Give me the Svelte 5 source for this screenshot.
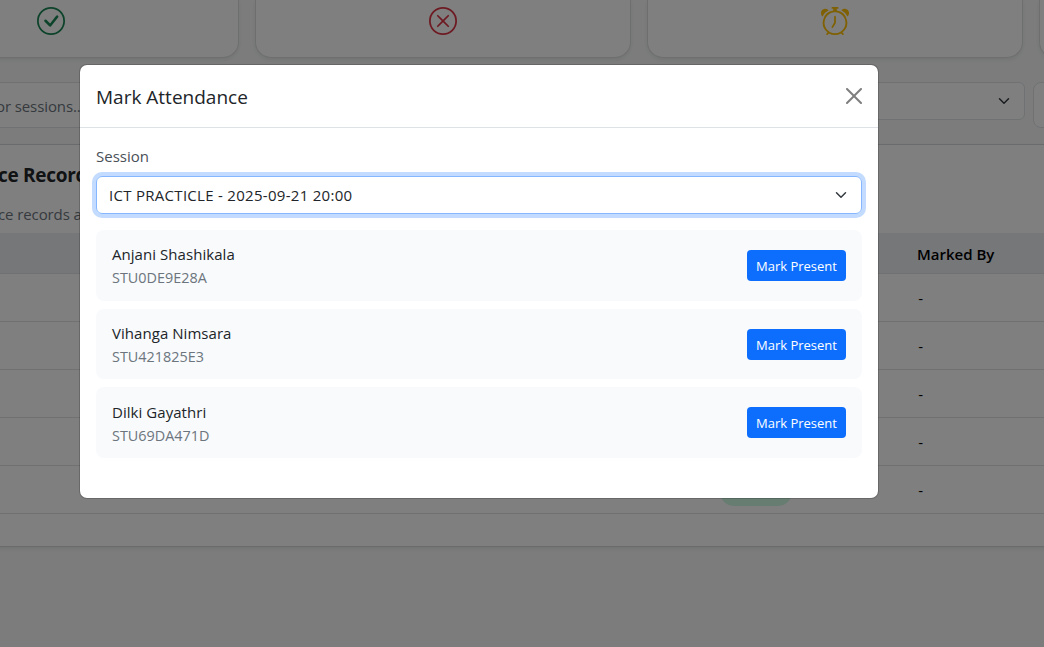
<script>
  const students = [
    { name: 'Anjani Shashikala', id: 'STU0DE9E28A' },
    { name: 'Vihanga Nimsara', id: 'STU421825E3' },
    { name: 'Dilki Gayathri', id: 'STU69DA471D' }
  ];
  const rows = [1, 2, 3, 4, 5];
  const stats = ['present', 'absent', 'late', 'rate'];
</script>

<div class="screen">
  <main class="page">
    <div class="stats">
      {#each stats as stat}
        <div class="stat {stat}">
          {#if stat !== 'rate'}
            <svg width="28" height="28" viewBox="0 0 16 16" fill="currentColor">
              {#if stat === 'late'}
                <path d="M8.5 5.5a.5.5 0 0 0-1 0v3.362l-1.429 2.38a.5.5 0 1 0 .858.515l1.5-2.5A.5.5 0 0 0 8.5 9z" />
                <path d="M6.5 0a.5.5 0 0 0 0 1H7v1.07a7.001 7.001 0 0 0-3.273 12.474l-.602.602a.5.5 0 0 0 .707.708l.746-.746A6.97 6.97 0 0 0 8 16a6.97 6.97 0 0 0 3.422-.892l.746.746a.5.5 0 0 0 .707-.708l-.601-.602A7.001 7.001 0 0 0 9 2.07V1h.5a.5.5 0 0 0 0-1zm1.038 3.018a6 6 0 0 1 .924 0 6 6 0 1 1-.924 0M0 3.5c0 .753.333 1.429.86 1.887A8.04 8.04 0 0 1 4.387 1.86 2.5 2.5 0 0 0 0 3.5M13.5 1c-.753 0-1.429.333-1.887.86a8.04 8.04 0 0 1 3.527 3.527A2.5 2.5 0 0 0 13.5 1" />
              {:else}
                <path d="M8 15A7 7 0 1 1 8 1a7 7 0 0 1 0 14m0 1A8 8 0 1 0 8 0a8 8 0 0 0 0 16" />
                {#if stat === 'present'}
                  <path d="m10.97 4.97-.02.022-3.473 4.425-2.093-2.094a.75.75 0 0 0-1.06 1.06L6.97 11.03a.75.75 0 0 0 1.079-.02l3.992-4.99a.75.75 0 0 0-1.071-1.05" />
                {:else}
                  <path d="M4.646 4.646a.5.5 0 0 1 .708 0L8 7.293l2.646-2.647a.5.5 0 0 1 .708.708L8.707 8l2.647 2.646a.5.5 0 0 1-.708.708L8 8.707l-2.646 2.647a.5.5 0 0 1-.708-.708L7.293 8 4.646 5.354a.5.5 0 0 1 0-.708" />
                {/if}
              {/if}
            </svg>
          {/if}
        </div>
      {/each}
    </div>

    <div class="filters">
      <div class="search"><span>or sessions...</span></div>
      <div class="filter">
        <svg width="16" height="12" viewBox="0 0 16 16"><path fill="none" stroke="#343a40" stroke-width="2" stroke-linecap="round" stroke-linejoin="round" d="m2 5 6 6 6-6" /></svg>
      </div>
      <div class="date"></div>
    </div>

    <section class="records">
      <h2>ce Records</h2>
      <p>ce records a</p>
      <div class="thead"><span>Marked By</span></div>
      {#each rows as row}
        <div class="trow">
          {#if row === 5}<b class="badge">present</b>{/if}
          <span>-</span>
        </div>
      {/each}
    </section>
  </main>

  <div class="backdrop">
    <div class="modal">
      <header>
        <h5>Mark Attendance</h5>
        <svg width="16" height="16" viewBox="0 0 16 16"><path d="M.293.293a1 1 0 0 1 1.414 0L8 6.586 14.293.293a1 1 0 1 1 1.414 1.414L9.414 8l6.293 6.293a1 1 0 0 1-1.414 1.414L8 9.414l-6.293 6.293a1 1 0 0 1-1.414-1.414L6.586 8 .293 1.707a1 1 0 0 1 0-1.414" /></svg>
      </header>
      <div class="body">
        <div class="label">Session</div>
        <div class="select">
          <span>ICT PRACTICLE - 2025-09-21 20:00</span>
          <svg width="16" height="12" viewBox="0 0 16 16"><path fill="none" stroke="#343a40" stroke-width="2" stroke-linecap="round" stroke-linejoin="round" d="m2 5 6 6 6-6" /></svg>
        </div>
        <div class="list">
          {#each students as s}
            <div class="student">
              <div class="who">
                <div class="name">{s.name}</div>
                <div class="sid">{s.id}</div>
              </div>
              <button>Mark Present</button>
            </div>
          {/each}
        </div>
      </div>
    </div>
  </div>
</div>

<style>
  :global(body) { background: #f8f9fa; }
  * { box-sizing: border-box; }
  .screen {
    position: relative; width: 1044px; height: 647px; overflow: hidden;
    background: #f8f9fa; color: #212529;
    font: 15px/24px "Segoe UI", "Open Sans", "Noto Sans", sans-serif;
  }
  .stats { display: flex; gap: 16px; margin-left: -137px; height: 58px; }
  .stat {
    flex: 0 0 376px; padding: 7px 0 0 173px; background: #fff;
    border: 1px solid #dcdddd; border-top: 0; border-radius: 0 0 16px 16px;
    box-shadow: 0 2px 4px rgba(0, 0, 0, .075);
  }
  .stat svg { display: block; }
  .present { color: #198754; }
  .absent { color: #dc3545; }
  .late { color: #ffc107; }
  .filters { display: flex; gap: 8px; align-items: flex-start; margin: 24px 0 0 -20px; height: 62px; width: 1120px; }
  .search, .filter, .date { border: 1px solid #dee2e6; border-radius: 8px; background: #fff; height: 46px; }
  .search { width: 637px; padding: 11px 0 0 15px; color: #6c757d; letter-spacing: -.1px; }
  .filter { width: 400px; height: 38px; border-radius: 6px; display: flex; align-items: center; justify-content: flex-end; padding-right: 12px; }
  .date { flex: 1; }
  .records {
    width: 1060px; margin-left: -8px; height: 403px; background: #fff;
    border: 1px solid #d5d7d9; box-shadow: 0 2px 4px rgba(0, 0, 0, .075);
  }
  .records h2 { margin: 18px 0 0 5px; font-size: 19px; line-height: 24px; font-weight: 700; letter-spacing: -.3px; }
  .records p { margin: 15px 0 7px 5px; color: #6c757d; letter-spacing: -.1px; }
  .thead { height: 41px; background: #eceff3; border-bottom: 1px solid #dee2e6; padding: 9px 0 0 924px; font-weight: 600; color: #000; }
  .trow { height: 48px; border-bottom: 1px solid #dee2e6; display: flex; align-items: center; justify-content: flex-end; padding-right: 128px; color: #000; }
  .badge { width: 72px; height: 29px; border-radius: 14px; margin: 3px 126px 0 0; background: #d1fae5; color: #047857; text-align: center; font-size: 13px; line-height: 26px; font-weight: 600; }
  .backdrop { position: absolute; inset: 0; background: rgba(0, 0, 0, .5); padding: 64px 0 0 79px; }
  .modal { width: 800px; height: 435px; background: #fff; background-clip: padding-box; border: 1px solid rgba(0, 0, 0, .175); border-radius: 8px; }
  header { height: 63px; border-bottom: 1px solid #dee2e6; display: flex; align-items: center; justify-content: space-between; padding: 0 16px; }
  header svg { opacity: .5; }
  h5 { margin: 2px 0 0; font-size: 19px; line-height: 30px; font-weight: 400; }
  .body { padding: 16px; }
  .label { margin-bottom: 8px; color: #495057; }
  .select {
    height: 38px; margin-bottom: 16.2px; padding: 0 12px; border: 1px solid #86b7fe; border-radius: 6px;
    box-shadow: 0 0 0 4px rgba(13, 110, 253, .25); letter-spacing: .29px;
    display: flex; align-items: center; justify-content: space-between;
  }
  .list { display: flex; flex-direction: column; gap: 8px; }
  .student { height: 70.6px; padding: 0 16px; background: #f8fafc; border-radius: 8px; display: flex; align-items: center; justify-content: space-between; }
  .who { height: 46.5px; margin-top: .4px; }
  .name { height: 24px; letter-spacing: .05px; }
  .sid { color: #6c757d; font-size: 14.4px; line-height: 23.5px; }
  button { width: 99px; height: 31px; padding: 2px 0 0; border: 0; border-radius: 4px; background: #0d6efd; color: #fff; font: 13px/21px "Segoe UI", "Open Sans", "Noto Sans", sans-serif; }
  button, .name, .sid, h5, .select, .label { white-space: nowrap; }
</style>
